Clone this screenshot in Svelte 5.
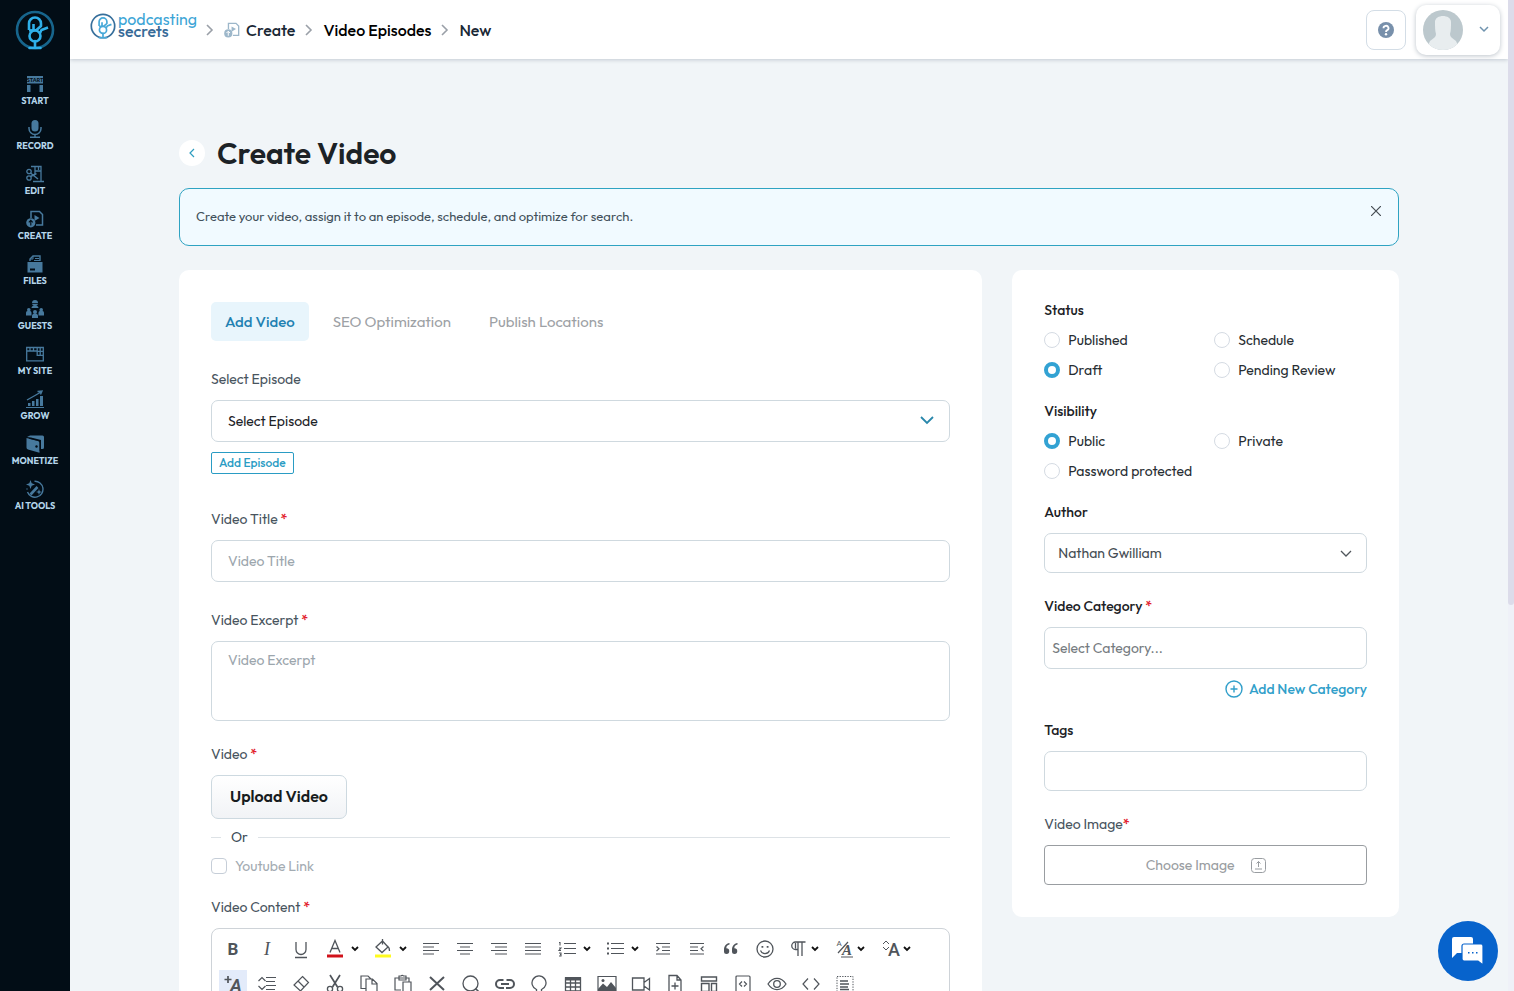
<script>
  let status = $state('Draft');
  let visibility = $state('Public');
  let tab = $state('Add Video');

  const tabs = ['Add Video', 'SEO Optimization', 'Publish Locations'];
  const statuses = ['Published', 'Schedule', 'Draft', 'Pending Review'];
  const visibilities = ['Public', 'Private', 'Password protected'];

  const createIcon =
    '<path d="M5 8V1.500h8.500l3 3v10.500h-6.500" fill="none" stroke="currentColor" stroke-width="1.500"/><path d="M8.500 5l5 3-5 3z" fill="currentColor"/><circle cx="4.800" cy="12.800" r="4.600" fill="currentColor"/><path d="M4.800 15.500v-5M2.800 12.400l2-2 2 2" fill="none" stroke="var(--arrow)" stroke-width="1.100"/>';

  const nav = [
    ['START', '<path d="M1 1h16v7.500H1zM1 10h3.500v7H1zM13.500 10H17v7h-3.500z" fill="currentColor"/><text x="9" y="6.700" font-size="5.500" font-weight="900" text-anchor="middle" font-family="Lato" fill="#020d16">START</text>'],
    ['RECORD', '<rect x="5.500" y="0" width="7" height="11.500" rx="3.500" fill="currentColor"/><path d="M3 7v1.500a6 6 0 0 0 12 0V7M9 14.500V17M4 17.200h10" fill="none" stroke="currentColor" stroke-width="1.500"/>'],
    ['EDIT', '<path d="M5 1.500h10v15H7M15 16.500h3M9 1.500v8M12.500 1.500V5M9 6h6" fill="none" stroke="currentColor" stroke-width="1.300"/><circle cx="3" cy="6.500" r="2.200" fill="#020d16" stroke="currentColor" stroke-width="1.300"/><circle cx="3" cy="13" r="2.200" fill="#020d16" stroke="currentColor" stroke-width="1.300"/><path d="M4.500 8l7.500 6M4.500 11.500l6-3" stroke="currentColor" stroke-width="1.500"/>'],
    ['CREATE', createIcon],
    ['FILES', '<path d="M1.500 7h15v10.500h-15z" fill="currentColor"/><path d="M4 6V4l3-3h7v5" fill="none" stroke="currentColor" stroke-width="1.400"/><path d="M4 4h3V1M9 3.500h4M8 5.500h6" fill="none" stroke="currentColor"/><path d="M4 13.500h5v2H4z" fill="#020d16"/>'],
    ['GUESTS', '<circle cx="9" cy="3" r="3" fill="currentColor"/><path d="M5.500 8a3.500 2.500 0 0 1 7 0zM0 15.500v-2.500a2.500 2 0 0 1 5.500 0v2.500zM12.500 15.500v-2.500a2.500 2 0 0 1 5.500 0v2.500zM6 18v-2a3 2.500 0 0 1 6 0v2z" fill="currentColor"/><circle cx="2.800" cy="9.800" r="1.800" fill="currentColor"/><circle cx="15.200" cy="9.800" r="1.800" fill="currentColor"/><circle cx="9" cy="12" r="2" fill="currentColor"/><path d="M6 3.500h6" stroke="#020d16" stroke-width=".8"/>'],
    ['MY SITE', '<path d="M.7 2.500h16.600v13.300H.7zM.7 6h10.500M4 2.500V6M7.500 2.500V6M11.200 2.500v7.800h6.100M11.200 6.300h6.100M14.200 2.500v7.800" fill="none" stroke="currentColor" stroke-width="1.300"/>'],
    ['GROW', '<path d="M2 13h2.500v3H2zM6 11h2.500v5H6zM10 9h2.500v7H10zM14 6h3v10h-3zM0 17h18v1H0z" fill="currentColor"/><path d="M1 10l8-4.500 6-3.500M11.500 1.500L16 1l-1.500 3.500" fill="none" stroke="currentColor" stroke-width="1.400"/>'],
    ['MONETIZE', '<path d="M1 2l3-1.500h12.500A1.500 1.500 0 0 1 18 2v10.500a1.500 1.500 0 0 1-1.500 1.500H15V5L5 2.500z" fill="currentColor"/><path d="M.5 3l11.500 3a2 2 0 0 1 1.500 2v9.700L2 14.500a2 2 0 0 1-1.500-2z" fill="currentColor"/><circle cx="10.500" cy="11.500" r="1.200" fill="#020d16"/><path d="M3 3.300l9.500 2.300a2 2 0 0 1 1.500 2V16" fill="none" stroke="#020d16" stroke-width=".8"/>'],
    ['AI TOOLS', '<path d="M8.500 1.200A8 8 0 1 1 1.500 12M1 9.500v-1" fill="none" stroke="currentColor" stroke-width="1.400"/><path d="M4.500 0l1.200 3.300L9 4.500 5.700 5.700 4.500 9 3.300 5.700 0 4.500l3.300-1.200zM13 9l.8 2.200L16 12l-2.200.8L13 15l-.8-2.200L10 12l2.200-.8z" fill="currentColor"/><path d="M4.500 14.500L11.500 7" stroke="currentColor" stroke-width="2.600"/>']
  ];

  const line = (d, w = 1.2) => `<path d="${d}" fill="none" stroke="currentColor" stroke-width="${w}"/>`;
  const glyph = (t, extra = '', x = 10, y = 16) =>
    `<text x="${x}" y="${y}" text-anchor="middle" fill="currentColor" font-family="Roboto" ${extra}>${t}</text>`;

  // [label, drawing, kind of drop-down arrow]
  const rowOne = [
    ['Bold', glyph('B', 'font-size="17" font-weight="700"')],
    ['Italic', glyph('I', 'font-size="18" font-style="italic" style="font-family:Liberation Serif"')],
    ['Underline', line('M5 3v7.500a5 5 0 0 0 10 0V3M4 18.500h12', 1.3)],
    ['Font color', line('M5 13.500L10 1.500l5 12M6.700 9.500h6.600', 1.3) + '<path d="M2 15.500h16v3H2z" fill="#d0121b"/>', 'wide'],
    ['Background color', line('M3 8L9.500 2l5.500 6-6 5.500zM9.500 0v5.500M14.500 7q2 1.500 2 5', 1.3) + '<path d="M2 15.500h16v3H2z" fill="#fffb1e"/>', 'wide'],
    ['Align left', line('M2 4.500h16M2 8h11M2 11.500h16M2 15h11')],
    ['Align center', line('M2 4.500h16M5 8h10M2 11.500h16M5 15h10')],
    ['Align right', line('M2 4.500h16M6 8h12M2 11.500h16M6 15h12')],
    ['Justify', line('M2 4.500h16M2 8h16M2 11.500h16M2 15h16')],
    ['Ordered list', line('M7 4.500h12M7 9.500h12M7 14.500h12M2 3.500h1v3M2 9h2l-2 2.500h2M2 14h2v3H2M3 15.500h1', 1.1), 'wide'],
    ['Unordered list', line('M6 4.500h13M6 9.500h13M6 14.500h13') + '<path d="M2 3.500h2v2H2zM2 8.500h2v2H2zM2 13.500h2v2H2z" fill="currentColor"/>', 'wide'],
    ['Indent', line('M3 4.500h14M9 8h8M9 11.500h8M3 15h14M3.500 7.500L6 9.800 3.500 12')],
    ['Outdent', line('M3 4.500h14M3 8h8M3 11.500h8M3 15h14M16.500 7.500L14 9.800l2.500 2.300')],
    ['Quote', '<path d="M8.500 4C5 4.500 3 7 3 11v1.500A2.500 2.500 0 0 0 5.500 15 2.700 2.700 0 1 0 5.300 9.300C5.300 7 6.500 6 8.500 5.500zM16.500 4C13 4.500 11 7 11 11v1.500a2.500 2.500 0 0 0 2.500 2.500 2.700 2.700 0 1 0-.2-5.700C13.300 7 14.500 6 16.500 5.500z" fill="currentColor"/>'],
    ['Emoji', '<circle cx="10" cy="10" r="8" fill="none" stroke="currentColor" stroke-width="1.300"/><path d="M6.500 7h1.800v1.800H6.500zM11.700 7h1.800v1.800h-1.800z" fill="currentColor"/>' + line('M5.500 11.500a4.800 4.800 0 0 0 9 0')],
    ['Paragraph', line('M9 17V3h7.500M13 3v14M9 10.500H6.500a3.700 3.700 0 0 1 0-7.500H10M6.500 4v5.500', 1.3), 'tight'],
    ['Text style', glyph('A', 'font-size="8"', 4, 7) + glyph('A', 'font-size="15" font-style="italic" font-weight="700" style="font-family:Liberation Serif"', 12, 16) + line('M3 14L13 3M6 18h12'), 'tight'],
    ['Font size', glyph('A', 'font-size="18" font-weight="500"', 13, 17) + line('M2 5l3-3 3 3M2 8l3 3 3-3', 1), 'tight']
  ];

  const rowTwo = [
    ['Inline format', line('M1.500 5.500h7M5 2v7', 1.7) + glyph('A', 'font-size="17" font-style="italic" font-weight="700"', 13, 17)],
    ['Line height', line('M9 3.500h10M9 7.500h9M9 11.500h10M9 15.500h9M1.500 7L5 3.500 8.500 7M1.500 12L5 15.500 8.500 12')],
    ['Clear format', line('M11.500 2.500l6 6-8 8.500-6.500-6zM7 7l6 6')],
    ['Cut', line('M5 1l7.500 12M15 1L7.500 13', 1.7) + '<circle cx="5" cy="15" r="2.600" fill="none" stroke="currentColor" stroke-width="1.300"/><circle cx="15" cy="15" r="2.600" fill="none" stroke="currentColor" stroke-width="1.300"/>'],
    ['Copy', line('M7 14.500H2V2h7l3 3M7 5h6.500l4.500 4.500V18H7zM13 5v5h5')],
    ['Paste', line('M8 16H2V4h14v4M6 4V2h2a1.500 1.500 0 0 1 2.500 0H13v4H6zM10 8h8v10h-8z')],
    ['Delete', line('M3 3l14 13M17 3L3 16', 2)],
    ['Find', '<circle cx="9.500" cy="9.500" r="7.500" fill="none" stroke="currentColor" stroke-width="1.300"/>' + line('M14.500 14.500l4 4', 1.6)],
    ['Link', line('M9 14H5a4 4 0 0 1 0-8h3.500M11 14h4a4 4 0 0 0 0-8h-3.500M6 10h8', 2)],
    ['Special character', line('M3 18h4.500v-2.500a7 7 0 1 1 5 0V18H17', 1.3)],
    ['Table', line('M2.500 4h15v13h-15zM2.500 9h15M2.500 13h15M7.500 5v12M12.500 5v12', 1.3) + '<path d="M2 3h16v3.500H2z" fill="currentColor"/>'],
    ['Image', line('M1 2.500h18v14H1z') + '<path d="M1 15l5-5.500 4 3.500 4-5 5 6v3H1z" fill="currentColor"/><circle cx="6" cy="6.500" r="1.500" fill="currentColor"/>'],
    ['Video', line('M1.500 4h11.500v12H1.500zM13 8.500l5.500-4v11.500L13 12', 1.3)],
    ['Document', line('M4 1.500h8l4 4.500v12.500H4zM12 1.500V6h4M10 8.500v7M6.500 12h7', 1.3)],
    ['Template', line('M2.500 3h15v4h-15zM2.500 9.500H10v8H2.500zM12.500 9.500h5v8h-5z', 1.4)],
    ['Code block', line('M4 2h12a1 1 0 0 1 1 1v14a1 1 0 0 1-1 1H4a1 1 0 0 1-1-1V3a1 1 0 0 1 1-1zM9 7.500L6.500 10 9 12.500M11 7.500l2.500 2.500L11 12.500')],
    ['Preview', line('M1 10c5-7.500 13-7.500 18 0-5 7.500-13 7.500-18 0z', 1.3) + '<circle cx="10" cy="10" r="3.300" fill="none" stroke="currentColor" stroke-width="1.300"/>'],
    ['Code', line('M7 4.500L2 10l5 5.500M13 4.500l5 5.500-5 5.500')],
    ['Select all', line('M5 7h8M5 10h9M5 13h8M5 15.500h9', 1.3) + '<path d="M2 2.500h16v15H2z" fill="none" stroke="currentColor" stroke-dasharray="1.300 1.300"/>']
  ];
</script>

{#snippet mic()}
  <circle cx="20" cy="20" r="18" fill="none" stroke="var(--ring)" stroke-width="2.600" />
  <path d="M14 20v-6.500a6 6 0 0 1 12 0V16l-4.500 4-7.500.500M18.500 14v5M33 17.500l-6.500 2.500-1.500 3" fill="none" stroke="var(--mic)" stroke-width="2.600" stroke-linejoin="round" />
  <circle cx="20" cy="26" r="5.500" fill="none" stroke="var(--mic)" stroke-width="2.600" />
  <path d="M20 31v7M14.500 38h11" fill="none" stroke="var(--mic)" stroke-width="2.600" stroke-linecap="round" />
{/snippet}

{#snippet sep()}
  <svg class="sep" width="8" height="12" viewBox="0 0 8 12"><path d="M1 1l5 5-5 5" fill="none" stroke="#9aa0a8" stroke-width="1.600" /></svg>
{/snippet}

{#snippet tools(items, activeFirst)}
  <div class="tool-row">
    {#each items as [name, art, drop], i}
      <button type="button" class={['tool', drop, activeFirst && i === 0 && 'on']} aria-label={name}>
        <svg width="20" height="20" viewBox="0 0 20 20">{@html art}</svg>
        {#if drop}
          <svg width="8" height="6" viewBox="0 0 8 6"><path d="M1 1l3 3 3-3" fill="none" stroke="#111" stroke-width="1.800" /></svg>
        {/if}
      </button>
    {/each}
  </div>
{/snippet}

<div class="app">
  <aside>
    <a class="mark" href="#home" aria-label="Home">
      <svg width="40" height="40" viewBox="0 0 40 40" style:--ring="#17658c" style:--mic="#2fb0ea">{@render mic()}</svg>
    </a>
    <nav>
      {#each nav as [label, art]}
        <a class="nav-item" href="#nav">
          <svg width="18" height="18" viewBox="0 0 18 18">{@html art}</svg>
          <span>{label}</span>
        </a>
      {/each}
    </nav>
  </aside>

  <div class="page">
    <header>
      <a class="brand" href="#home">
        <svg width="26" height="28" viewBox="0 0 40 43" style:--ring="#376f9b" style:--mic="#48a9d8">{@render mic()}</svg>
        <span class="brand-name"><span>podcasting</span><span class="dark">secrets</span></span>
      </a>
      <div class="crumbs">
        {@render sep()}
        <a href="#create"><svg class="crumb-icon" width="16" height="16" viewBox="0 0 18 18">{@html createIcon}</svg>Create</a>
        {@render sep()}
        <a class="strong" href="#episodes">Video Episodes</a>
        {@render sep()}
        <span>New</span>
      </div>
      <div class="account">
        <button type="button" class="help" aria-label="Help">
          <svg width="16" height="16" viewBox="0 0 16 16"><circle cx="8" cy="8" r="8" fill="#7890ab" /><path d="M5.500 6.200a2.500 2.300 0 1 1 3.700 1.900C8.300 8.600 8 8.900 8 9.900" fill="none" stroke="#fff" stroke-width="1.800" /><circle cx="8" cy="12.200" r="1.200" fill="#fff" /></svg>
        </button>
        <button type="button" class="user" aria-label="Account">
          <svg width="40" height="40" viewBox="0 0 40 40">
            <clipPath id="face"><circle cx="20" cy="20" r="20" /></clipPath>
            <g clip-path="url(#face)"><path d="M0 0h40v40H0z" fill="#bcc8cd" /><path d="M12 12c0-8 16-8 16 0 0 5 0 9-1 12 0 3 2 4 6 7l4 9H3l4-9c4-3 6-4 6-7-1-3-1-7-1-12z" fill="#e8edef" /></g>
          </svg>
          <svg width="10" height="7" viewBox="0 0 10 7"><path d="M1 1l4 4 4-4" fill="none" stroke="#6f93ae" stroke-width="1.500" /></svg>
        </button>
      </div>
    </header>

    <main>
      <div class="title">
        <button type="button" class="back" aria-label="Back"><svg width="6" height="10" viewBox="0 0 6 10"><path d="M5 1L1 5l4 4" fill="none" stroke="#2e9dc0" stroke-width="1.200" /></svg></button>
        <h1>Create Video</h1>
      </div>

      <div class="notice">
        <p>Create your video, assign it to an episode, schedule, and optimize for search.</p>
        <button type="button" aria-label="Close"><svg width="10" height="10" viewBox="0 0 10 10"><path d="M0 0l10 10M10 0L0 10" stroke="#454c52" stroke-width="1.200" /></svg></button>
      </div>

      <div class="columns">
        <form class="card editor-card">
          <div class="tabs">
            {#each tabs as t}
              <button type="button" class:active={tab === t} onclick={() => (tab = t)}>{t}</button>
            {/each}
          </div>

          <label for="episode">Select Episode</label>
          <div class="select">
            <select id="episode"><option>Select Episode</option></select>
            <svg width="14" height="9" viewBox="0 0 14 9"><path d="M1 1l6 6 6-6" fill="none" stroke="#2987ab" stroke-width="1.800" /></svg>
          </div>
          <button type="button" class="add-episode">Add Episode</button>

          <label for="title" class="after-add">Video Title <b>*</b></label>
          <input id="title" class="field" type="text" placeholder="Video Title" />

          <label for="excerpt" class="after-field">Video Excerpt <b>*</b></label>
          <textarea id="excerpt" class="field" placeholder="Video Excerpt"></textarea>

          <label for="upload" class="after-area">Video <b>*</b></label>
          <button id="upload" type="button" class="upload">Upload Video</button>
          <div class="or"><span>Or</span></div>
          <label class="youtube"><input type="checkbox" />Youtube Link</label>

          <label for="content" class="after-check">Video Content <b>*</b></label>
          <div class="editor">
            {@render tools(rowOne, false)}
            {@render tools(rowTwo, true)}
            <textarea id="content"></textarea>
          </div>
        </form>

        <form class="card side">
          <fieldset>
            <legend>Status</legend>
            {#each statuses as s}
              <label class="radio"><input type="radio" name="status" value={s} bind:group={status} />{s}</label>
            {/each}
          </fieldset>
          <fieldset>
            <legend>Visibility</legend>
            {#each visibilities as v}
              <label class="radio"><input type="radio" name="visibility" value={v} bind:group={visibility} />{v}</label>
            {/each}
          </fieldset>

          <label for="author" class="strong">Author</label>
          <div class="select short">
            <select id="author"><option>Nathan Gwilliam</option></select>
            <svg width="12" height="8" viewBox="0 0 12 8"><path d="M1 1l5 5 5-5" fill="none" stroke="#50565b" stroke-width="1.300" /></svg>
          </div>

          <label for="category" class="strong gap">Video Category <b>*</b></label>
          <input id="category" class="field category" type="text" placeholder="Select Category..." />
          <button type="button" class="add-category">
            <svg width="18" height="18" viewBox="0 0 18 18"><path d="M9 5.500v7M5.500 9h7" stroke="currentColor" stroke-width="1.400" /><circle cx="9" cy="9" r="8" fill="none" stroke="currentColor" stroke-width="1.400" /></svg>
            Add New Category
          </button>

          <label for="tags" class="strong after-link">Tags</label>
          <input id="tags" class="field short-field" type="text" />

          <label for="image" class="gap">Video Image<b>*</b></label>
          <button id="image" type="button" class="choose">
            Choose Image
            <svg width="15" height="15" viewBox="0 0 15 15"><rect x=".500" y=".500" width="14" height="14" rx="3" fill="none" stroke="currentColor" /><path d="M7.500 9V3.500M5.500 5.500l2-2 2 2M4 11h7" fill="none" stroke="currentColor" /></svg>
          </button>
        </form>
      </div>
    </main>
  </div>

  <div class="track"><div class="thumb"></div></div>

  <button type="button" class="chat" aria-label="Chat">
    <svg width="32" height="28" viewBox="0 0 32 28"><path d="M2 0h17a2 2 0 0 1 2 2v12a2 2 0 0 1-2 2H5l-5 5V2a2 2 0 0 1 2-2z" fill="#fff" /><path d="M12 7h17a2 2 0 0 1 2 2v19l-5-4H12a2 2 0 0 1-2-2V9a2 2 0 0 1 2-2z" fill="#fff" stroke="#0763cc" stroke-width="1.200" /><path d="M16 15h1.500v1.500H16zM20 15h1.500v1.500H20zM24 15h1.500v1.500H24z" fill="#0763cc" /></svg>
  </button>
</div>

<style>
  :global(body) { margin: 0; }
  .app, .app :global(*) { box-sizing: border-box; }
  .app {
    display: grid;
    grid-template-columns: 70px minmax(0, 1fr) 6px;
    height: 100vh;
    overflow: hidden;
    background: #f1f5f8;
    color: #1c2226;
    font-family: Outfit, Lato, sans-serif;
    font-size: 14px;
    line-height: 22px;
  }
  button, input, select, textarea { font: inherit; margin: 0; }
  button { cursor: pointer; padding: 0; border: 0; background: none; color: inherit; }
  a { color: inherit; text-decoration: none; }
  svg { display: block; flex: none; }

  aside { background: #020d16; --arrow: #020d16; }
  .mark { display: flex; justify-content: center; padding: 10px 0 25px; }
  nav { display: grid; }
  .nav-item {
    display: flex;
    flex-direction: column;
    align-items: center;
    gap: 2px;
    height: 45px;
    color: #47799d;
  }
  .nav-item span { font-size: 9px; line-height: 12px; font-weight: 700; color: #b5d6eb; }

  .page { display: flex; flex-direction: column; min-width: 0; overflow: hidden; }
  header {
    display: flex;
    align-items: center;
    flex: none;
    height: 59px;
    padding: 0 8px 0 20px;
    background: #fff;
    box-shadow: 0 1px 4px #c3cad2;
    z-index: 1;
  }
  .brand { display: flex; gap: 2px; padding-bottom: 6px; }
  .brand-name { display: flex; flex-direction: column; width: 80px; font-size: 16px; line-height: 12px; color: #3da5d6; }
  .brand-name .dark { font-weight: 500; color: #376b98; }
  .crumbs { display: flex; align-items: center; gap: 10px; padding-left: 8px; font-size: 16px; font-weight: 500; color: #1a2835; }
  .crumbs a { display: flex; align-items: center; gap: 6px; }
  .crumbs .strong { color: #000; }
  .crumb-icon { color: #9db7ca; --arrow: #fff; }
  .account { display: flex; align-items: center; gap: 10px; margin-left: auto; }
  .help { display: grid; place-items: center; width: 40px; height: 40px; border: 1px solid #d3dde6; border-radius: 8px; }
  .user { display: flex; align-items: center; justify-content: space-between; width: 84px; height: 50px; padding: 0 11px 0 7px; border-radius: 10px; background: #fff; box-shadow: 0 1px 5px #bcc3ca; }

  main { flex: 1; min-height: 0; overflow: auto; scrollbar-width: none; padding: 74px 20px 40px; }
  .title, .notice, .columns { max-width: 1220px; margin: 0 auto; }
  .title { display: flex; align-items: center; gap: 12px; height: 40px; }
  .back { display: grid; place-items: center; width: 26px; height: 26px; border-radius: 50%; background: #fff; }
  h1 { margin: 0; font-size: 30px; line-height: 40px; font-weight: 600; }
  .notice {
    display: flex;
    justify-content: space-between;
    align-items: center;
    height: 58px;
    margin-top: 15px;
    padding: 0 17px 2px 16px;
    border: 1px solid #2fa3c2;
    border-radius: 10px;
    background: #f1faff;
    color: #42515b;
    font-size: 13px;
  }
  .notice p { margin: 0; }
  .notice button { margin-bottom: 10px; }
  .columns { display: grid; grid-template-columns: 27fr 13fr; align-items: start; gap: 30px; margin-top: 24px; }
  .card { display: flex; flex-direction: column; min-width: 0; padding: 32px; border-radius: 10px; background: #fff; }

  label { display: block; margin-bottom: 10px; color: #48545e; }
  label b { color: #e2202c; font-weight: 500; }
  label.strong { color: #1c2226; font-weight: 500; }
  .tabs { display: flex; gap: 10px; margin-bottom: 27px; }
  .tabs button { height: 39px; padding: 0 14px; border-radius: 5px; font-size: 15px; color: #9da1a5; }
  .tabs .active { background: #e8f5fc; color: #1f81b2; font-weight: 500; }

  .field, select { width: 100%; height: 42px; padding: 0 16px; border: 1px solid #cfd9df; border-radius: 7px; background: #fff; color: #1c2226; outline: 0; }
  .field::placeholder { color: #9ca6ad; opacity: 1; }
  textarea.field { height: 80px; padding-top: 7px; resize: none; display: block; }
  .select { position: relative; }
  .select select { appearance: none; display: block; }
  .select svg { position: absolute; right: 16px; top: 16px; pointer-events: none; }
  .short select { height: 40px; padding: 0 13px; color: #454d53; }
  .short svg { right: 15px; top: 17px; }
  .short-field { height: 40px; }
  .category { padding: 0 7px; }
  .category::placeholder { color: #757b80; }

  .add-episode { align-self: flex-start; height: 22px; margin-top: 10px; padding: 0 7px; border: 1px solid #2a9cc4; border-radius: 2px; font-size: 12px; line-height: 20px; font-weight: 500; color: #2a9cc4; }
  .after-add { margin-top: 34px; }
  .after-field { margin-top: 27px; }
  .after-area { margin-top: 22px; }
  .gap { margin-top: 22px; }
  .upload { align-self: flex-start; height: 44px; padding: 0 18px 2px; border: 1px solid #cdd9e0; border-radius: 7px; background: linear-gradient(#fff, #f1f3f6); font-size: 16px; font-weight: 600; color: #171c20; }
  .or { display: flex; align-items: center; gap: 10px; margin: 7px 0; color: #3d4c57; }
  .or::before, .or::after { content: ''; height: 1px; width: 10px; background: #dde2e6; }
  .or::after { flex: 1; }
  .youtube, .radio { display: flex; align-items: center; gap: 8px; margin: 0; }
  .youtube { color: #a3abb2; }
  .youtube input { appearance: none; width: 16px; height: 16px; border: 1px solid #c6ced8; border-radius: 4px; }
  .after-check { margin-top: 19px; }

  .editor { border: 1px solid #ced3d8; border-radius: 8px; padding: 6px 7px; }
  .tool-row { display: flex; gap: 6px; margin-bottom: 7px; }
  .tool { display: flex; align-items: center; width: 28px; height: 28px; padding-left: 4px; color: #50555b; }
  .tool.wide { width: 42px; gap: 6px; }
  .tool.tight { width: 40px; gap: 2px; }
  .tool.on { background: #e3ebfa; }
  .editor textarea { display: block; width: 100%; height: 240px; border: 0; outline: 0; resize: none; }

  .side { padding-top: 29px; }
  fieldset { display: grid; grid-template-columns: 170px 1fr; row-gap: 8px; margin: 0 0 19px; padding: 0; border: 0; }
  legend { padding: 0; margin-bottom: 8px; font-weight: 500; }
  .radio { color: #272d32; white-space: nowrap; }
  .radio input { appearance: none; width: 16px; height: 16px; border: 1px solid #d5dbe3; border-radius: 50%; background: #fff; }
  .radio input:checked { border: 4px solid #32a2d3; }
  .add-category { display: flex; align-items: center; align-self: flex-end; gap: 6px; height: 22px; margin-top: 9px; color: #319fca; font-weight: 500; }
  .after-link { margin-top: 19px; }
  .choose { display: flex; align-items: center; justify-content: center; gap: 16px; height: 40px; border: 1px solid #999da1; border-radius: 4px; color: #999da1; }

  .track { background: #eff1f8; }
  .thumb { height: 61vh; border-radius: 0 0 4px 4px; background: #dcdcea; }
  .chat { position: fixed; right: 16px; bottom: 10px; z-index: 2; display: grid; place-items: center; width: 60px; height: 60px; border-radius: 50%; background: #0763cc; }
</style>
